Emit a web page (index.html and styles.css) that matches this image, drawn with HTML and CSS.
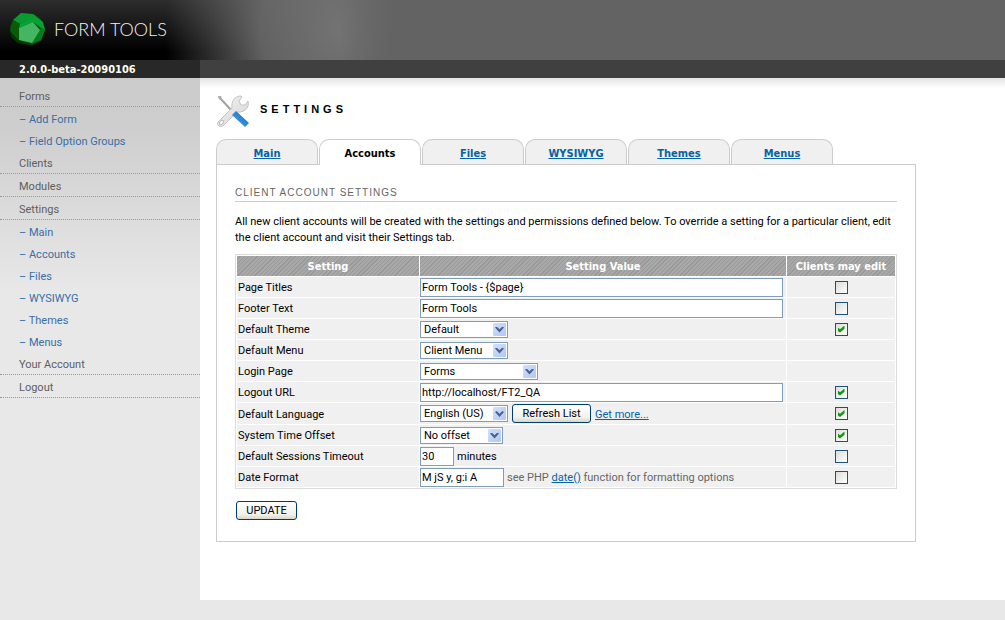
FILE: index.html
```
<!DOCTYPE html>
<html lang="en">
<head>
<meta charset="utf-8">
<title>Form Tools - Settings</title>
<link rel="stylesheet" href="styles.css">
</head>
<body>
<header class="banner">
  <svg class="logo" width="37" height="36" viewBox="0 0 37 36" aria-hidden="true">
    <path fill="#064d04" d="M4 9 12 2 25 3 31 7 36 19 32 30 23 34 9 32 2 25 1 16z"/>
    <path fill="#079b30" d="M4 9 12 2 24 3 25 9 11 13z"/>
    <path fill="#07a035" d="M24 3 34 11 36 19 32 17 24 9z"/>
    <path fill="#0b5a07" d="M4 9 11 13 9 29 1 20z"/>
    <path fill="#033503" d="M1 20 9 29 22 33 20 34 9 32 3 27z"/>
    <path fill="#087d20" d="M32 17 36 19 32 29 22 33z"/>
    <path fill="#08a336" d="M11 13 24 8 32 17 24 11 10 17z"/>
    <path fill="#44b663" d="M10 17 24 11 31 19 23 32 10 29z"/>
  </svg>
  <span class="brand">FORM TOOLS</span>
</header>
<div class="version-bar"><span class="version">2.0.0-beta-20090106</span></div>
<div class="layout">
  <nav class="sidebar">
    <a class="item" href="#">Forms</a>
    <a class="sub" href="#">– Add Form</a>
    <a class="sub" href="#">– Field Option Groups</a>
    <a class="item" href="#">Clients</a>
    <a class="item" href="#">Modules</a>
    <a class="item" href="#">Settings</a>
    <a class="sub" href="#">– Main</a>
    <a class="sub" href="#">– Accounts</a>
    <a class="sub" href="#">– Files</a>
    <a class="sub" href="#">– WYSIWYG</a>
    <a class="sub" href="#">– Themes</a>
    <a class="sub" href="#">– Menus</a>
    <a class="item" href="#">Your Account</a>
    <a class="item" href="#">Logout</a>
  </nav>
  <main class="content">
    <div class="title-row">
      <svg width="34" height="34" viewBox="0 0 34 34" aria-hidden="true">
        <defs>
          <linearGradient id="steel" x1="0" y1="0" x2="1" y2="1"><stop offset="0" stop-color="#f6f6f6"/><stop offset="1" stop-color="#d2d2d2"/></linearGradient>
          <linearGradient id="grip" x1="0" y1="1" x2="1" y2="0"><stop offset="0" stop-color="#5aa8e6"/><stop offset=".5" stop-color="#3088d4"/><stop offset="1" stop-color="#1a62b0"/></linearGradient>
        </defs>
        <path d="M3 3 17 18" stroke="#a2a2a2" stroke-width="2"/>
        <path d="M2 2 5 2 6 6 3 5z" fill="#aaa"/>
        <path fill="url(#steel)" stroke="#c4c4c4" d="M2 28 16 14C15 8 18 2 25 2L26 3 23 7 25 11 29 11 32 7C34 14 28 19 21 18L8 31C5 34 0 32 2 28z"/>
        <ellipse cx="5.500" cy="28.500" rx="1.500" ry="2.500" transform="rotate(40 5.500 28.500)" fill="#fff" stroke="#bbb"/>
        <path fill="url(#grip)" d="M16 21 20 17 33 29 29 33z"/>
      </svg>
      <h1 class="title">SETTINGS</h1>
    </div>
    <div class="tabs">
      <a class="tab" href="#">Main</a>
      <a class="tab current" href="#">Accounts</a>
      <a class="tab" href="#">Files</a>
      <a class="tab" href="#">WYSIWYG</a>
      <a class="tab" href="#">Themes</a>
      <a class="tab" href="#">Menus</a>
    </div>
    <form class="panel">
      <h2 class="subtitle">CLIENT ACCOUNT SETTINGS</h2>
      <p class="intro">All new client accounts will be created with the settings and permissions defined below. To override a setting for a particular client, edit the client account and visit their Settings tab.</p>
      <table class="settings">
        <thead>
          <tr><th class="col-name">Setting</th><th>Setting Value</th><th class="col-edit">Clients may edit</th></tr>
        </thead>
        <tbody>
          <tr>
            <td><label for="titles">Page Titles</label></td>
            <td><div class="field"><input class="text wide" id="titles" type="text" value="Form Tools - {$page}"></div></td>
            <td><input class="check" type="checkbox" aria-label="Clients may edit page titles"></td>
          </tr>
          <tr>
            <td><label for="footer">Footer Text</label></td>
            <td><div class="field"><input class="text wide" id="footer" type="text" value="Form Tools"></div></td>
            <td><input class="check" type="checkbox" aria-label="Clients may edit footer text"></td>
          </tr>
          <tr>
            <td><label for="theme">Default Theme</label></td>
            <td><div class="field"><span class="picker"><select id="theme"><option>Default</option></select></span></div></td>
            <td><input class="check" type="checkbox" checked aria-label="Clients may edit theme"></td>
          </tr>
          <tr>
            <td><label for="menu">Default Menu</label></td>
            <td><div class="field"><span class="picker"><select id="menu"><option>Client Menu</option></select></span></div></td>
            <td></td>
          </tr>
          <tr>
            <td><label for="login">Login Page</label></td>
            <td><div class="field"><span class="picker long"><select id="login"><option>Forms</option></select></span></div></td>
            <td></td>
          </tr>
          <tr>
            <td><label for="logout">Logout URL</label></td>
            <td><div class="field"><input class="text wide" id="logout" type="text" value="http://localhost/FT2_QA"></div></td>
            <td><input class="check" type="checkbox" checked aria-label="Clients may edit logout URL"></td>
          </tr>
          <tr class="tall">
            <td><label for="language">Default Language</label></td>
            <td><div class="field"><span class="picker"><select id="language"><option>English (US)</option></select></span><button class="button refresh" type="button">Refresh List</button><a href="#">Get more...</a></div></td>
            <td><input class="check" type="checkbox" checked aria-label="Clients may edit language"></td>
          </tr>
          <tr>
            <td><label for="offset">System Time Offset</label></td>
            <td><div class="field"><span class="picker short"><select id="offset"><option>No offset</option></select></span></div></td>
            <td><input class="check" type="checkbox" checked aria-label="Clients may edit time offset"></td>
          </tr>
          <tr>
            <td><label for="timeout">Default Sessions Timeout</label></td>
            <td><div class="field snug"><input class="text tiny" id="timeout" type="text" value="30"><span>minutes</span></div></td>
            <td><input class="check" type="checkbox" aria-label="Clients may edit sessions timeout"></td>
          </tr>
          <tr>
            <td><label for="date">Date Format</label></td>
            <td><div class="field snug"><input class="text medium" id="date" type="text" value="M jS y, g:i A"><span class="hint">see PHP <a href="#">date()</a> function for formatting options</span></div></td>
            <td><input class="check" type="checkbox" aria-label="Clients may edit date format"></td>
          </tr>
        </tbody>
      </table>
      <button class="button update" type="submit">UPDATE</button>
    </form>
  </main>
</div>
</body>
</html>
```
FILE: styles.css
```
* { box-sizing: border-box; }

body {
  margin: 0;
  background: #e8e8e8;
  color: #000;
  font: 11px/16px Roboto, sans-serif;
}

a { color: #0463a3; }

.banner {
  display: flex;
  align-items: center;
  gap: 8px;
  height: 60px;
  padding: 0 9px 2px;
  background:
    linear-gradient(90deg, rgba(99, 99, 99, 0) 340px, #636363 400px),
    radial-gradient(ellipse 175px 220px at 340px 30px, #737373, rgba(108, 108, 108, .9) 45%, rgba(60, 60, 60, 0)),
    linear-gradient(#2d2d2d, #000 85%);
}

.brand {
  color: #f2f2f2;
  font: 300 18px/24px Lato, sans-serif;
}

.version-bar {
  height: 18px;
  background: linear-gradient(90deg, #282828 200px, #404040 200px);
}

.version {
  display: block;
  padding-left: 19px;
  color: #fffff0;
  font-family: "DejaVu Sans Condensed", sans-serif;
  font-weight: bold;
  line-height: 19px;
}

.layout {
  display: grid;
  grid-template-columns: 200px 1fr;
}

.sidebar {
  padding-top: 6px;
  background: linear-gradient(#cbcbcb, #cecece 50px, #e8e8e8 215px);
}

.sidebar a {
  display: block;
  height: 22px;
  padding-left: 19px;
  line-height: 26px;
  text-decoration: none;
}

.sidebar .item {
  height: 23px;
  border-bottom: 1px dotted #999;
  color: #5e5e5e;
}

.sidebar .sub { color: #3a6ea5; }

.content {
  padding: 16px 16px 58px;
  background: linear-gradient(#e4e4e4, #fff 10px);
}

.title-row {
  display: flex;
  align-items: center;
  gap: 10px;
  height: 34px;
}

.title {
  margin: 0 0 4px;
  font: bold 11px/16px "Liberation Sans", sans-serif;
  letter-spacing: 4px;
}

.tabs {
  display: flex;
  gap: 1px;
  margin-top: 11px;
}

.tab {
  width: 102px;
  height: 25px;
  border: 1px solid #ccc;
  border-bottom: 0;
  border-radius: 10px 10px 0 0;
  background: #f0f0f0;
  font-family: "DejaVu Sans Condensed", sans-serif;
  font-weight: bold;
  line-height: 27px;
  text-align: center;
}

.tab.current {
  z-index: 1;
  height: 26px;
  margin-bottom: -1px;
  background: #fff;
  color: #000;
  text-decoration: none;
}

.panel {
  max-width: 700px;
  padding: 20px 18px 21px;
  border: 1px solid #ccc;
}

.subtitle {
  margin: 0;
  border-bottom: 1px solid #ccc;
  color: #666;
  font: 10px/16px "Liberation Sans", sans-serif;
  letter-spacing: 1px;
}

.intro { margin: 12px 0 8px; }

.settings {
  width: 100%;
  border: 1px solid #ddd;
  border-spacing: 1px;
  table-layout: fixed;
}

.settings th {
  height: 20px;
  padding: 2px 0 0;
  background: repeating-linear-gradient(135deg, #a8a8a8 0 2px, #999 2px 3px);
  color: #fff;
  font-family: "DejaVu Sans Condensed", sans-serif;
  line-height: 18px;
}

.col-name { width: 182px; }
.col-edit { width: 108px; }

.settings td {
  height: 20px;
  padding: 0 1px;
  background: #f0f0f0;
}

.settings .tall td { height: 21px; }

.settings td:last-child {
  line-height: 0;
  text-align: center;
}

.settings td:nth-child(2) { padding: 0 3px 0 0; }

.settings label {
  display: block;
  padding-top: 2px;
  line-height: 18px;
}

.field {
  display: flex;
  align-items: center;
  gap: 4px;
}

.field.snug { gap: 3px; }

.text, .picker select {
  border: 1px solid #7f9db9;
  border-radius: 0;
  background: #fff;
  color: #000;
  font: inherit;
}

.text {
  height: 19px;
  padding: 1px 1px 0;
}

.wide { width: 100%; }
.tiny { width: 34px; }
.medium { width: 84px; }

.picker {
  position: relative;
  width: 88px;
  height: 17px;
}

.picker.long { width: 118px; }
.picker.short { width: 83px; }

.picker select {
  appearance: none;
  display: block;
  width: 100%;
  height: 17px;
  padding: 0 3px;
  line-height: 15px;
}

.picker::before {
  content: "";
  position: absolute;
  top: 2px;
  right: 2px;
  width: 13px;
  height: 13px;
  border-radius: 1px;
  background: linear-gradient(135deg, #d4e0fc, #afc6f8);
  pointer-events: none;
}

.picker::after {
  content: "";
  position: absolute;
  top: 6px;
  right: 4px;
  width: 9px;
  height: 6px;
  background: #4d6185;
  clip-path: polygon(0 18%, 18% 0, 50% 46%, 82% 0, 100% 18%, 50% 100%);
  pointer-events: none;
}

.button {
  height: 19px;
  padding: 1px 8px 0;
  border: 1px solid #003c74;
  border-radius: 3px;
  background: linear-gradient(#fff, #f1f0ea 75%, #d9d4c8);
  color: #000;
  font: inherit;
}

.refresh { min-width: 79px; }

.update {
  display: block;
  min-width: 61px;
  margin: 12px 0 0 1px;
}

.field > a, .field > span:not(.picker) { padding-top: 2px; }

.hint { color: #666; }

.check {
  appearance: none;
  display: inline-block;
  width: 13px;
  height: 13px;
  margin: 0;
  border: 1px solid #1c5180;
  background: linear-gradient(135deg, #dcdcd7, #fff);
  vertical-align: middle;
}

.check:checked::before {
  content: "";
  display: block;
  width: 7px;
  height: 7px;
  margin: 2px;
  background: #109a10;
  clip-path: polygon(0 25%, 36% 55%, 100% 0, 100% 48%, 36% 100%, 0 75%);
}
```
